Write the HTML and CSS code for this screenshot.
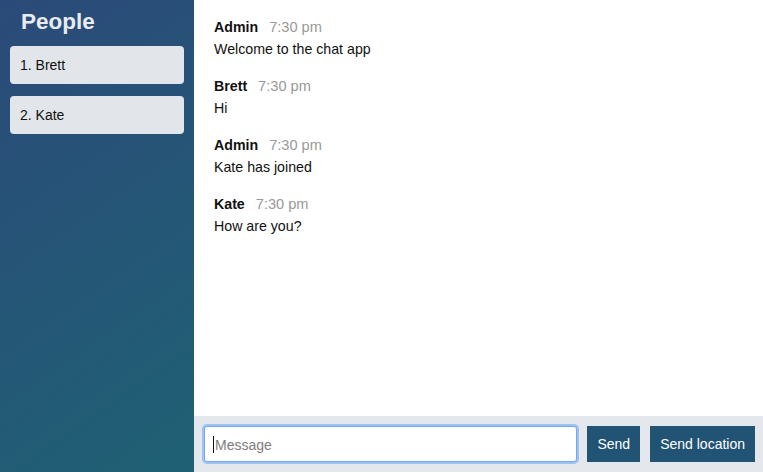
FILE: index.html
```html
<!DOCTYPE html>
<html>
<head>
<meta charset="utf-8">
<link rel="stylesheet" href="styles.css">
</head>
<body>
<div class="chat">
  <aside class="sidebar">
    <h3 class="sidebar-title">People</h3>
    <ol class="people">
      <li class="person">1. Brett</li>
      <li class="person">2. Kate</li>
    </ol>
  </aside>
  <main class="main">
    <ol class="messages">
      <li class="message">
        <div class="message-title"><b class="author">Admin</b><span class="time">7:30 pm</span></div>
        <div class="message-body">Welcome to the chat app</div>
      </li>
      <li class="message">
        <div class="message-title"><b class="author">Brett</b><span class="time">7:30 pm</span></div>
        <div class="message-body">Hi</div>
      </li>
      <li class="message">
        <div class="message-title"><b class="author">Admin</b><span class="time">7:30 pm</span></div>
        <div class="message-body">Kate has joined</div>
      </li>
      <li class="message">
        <div class="message-title"><b class="author">Kate</b><span class="time">7:30 pm</span></div>
        <div class="message-body">How are you?</div>
      </li>
    </ol>
    <footer class="footer">
      <form class="form">
        <div class="field">
          <input class="input" type="text" placeholder="Message">
          <span class="caret"></span>
        </div>
        <button class="btn" type="button">Send</button>
      </form>
      <button class="btn" type="button">Send location</button>
    </footer>
  </main>
</div>
</body>
</html>
```
FILE: styles.css
```css
* { box-sizing: border-box; }
html, body { margin: 0; padding: 0; height: 100%; }
body {
  font-family: "Liberation Sans", Arial, Helvetica, sans-serif;
  font-size: 14px;
  color: #111;
}
.chat {
  display: flex;
  height: 472px;
}
.sidebar {
  width: 194px;
  flex-shrink: 0;
  padding: 10px;
  background: linear-gradient(325deg, #1f6174 0%, #2b4a79 100%);
}
.sidebar-title {
  margin: 0 0 12px 0;
  padding-left: 11px;
  font-size: 22.5px;
  line-height: 24px;
  font-weight: bold;
  color: #e8ecf0;
}
.people {
  list-style: none;
  margin: 0;
  padding: 0;
  display: flex;
  flex-direction: column;
  gap: 12px;
}
.person {
  background: #e2e6ea;
  border-radius: 4px;
  padding: 10px 10px;
  line-height: 18px;
  font-size: 14px;
  color: #111;
}
.main {
  flex: 1;
  display: flex;
  flex-direction: column;
  background: #fff;
}
.messages {
  flex: 1;
  list-style: none;
  margin: 0;
  padding: 17px 20px 0 20px;
  font-size: 14.2px;
}
.message { margin-bottom: 17px; }
.message-title { line-height: 20px; margin-bottom: 2px; }
.author { font-weight: bold; color: #111; }
.time { color: #999; margin-left: 11px; font-size: 14.6px; }
.message-body { line-height: 20px; }
.footer {
  height: 56px;
  flex-shrink: 0;
  background: #e4e7eb;
  display: flex;
  align-items: center;
  padding: 0 8px 0 10px;
  gap: 10px;
}
.form {
  flex: 1;
  display: flex;
  gap: 10px;
  margin: 0;
}
.field {
  flex: 1;
  position: relative;
  display: flex;
}
.input {
  flex: 1;
  height: 36px;
  border: 1px solid #7aa6e8;
  border-radius: 3px;
  box-shadow: 0 0 0 2px #9cc3f7;
  padding: 1px 10px 0 10px;
  font-family: "Liberation Sans", Arial, sans-serif;
  font-size: 14px;
  color: #111;
  outline: none;
}
.input::placeholder { color: #7d7d7d; }
.caret {
  position: absolute;
  left: 9px;
  top: 10px;
  width: 1px;
  height: 17px;
  background: #111;
}
.btn {
  height: 36px;
  border: none;
  background: #215375;
  color: #fff;
  font-family: "Liberation Sans", Arial, sans-serif;
  font-size: 14px;
  padding: 0 10px;
  cursor: pointer;
}
```
